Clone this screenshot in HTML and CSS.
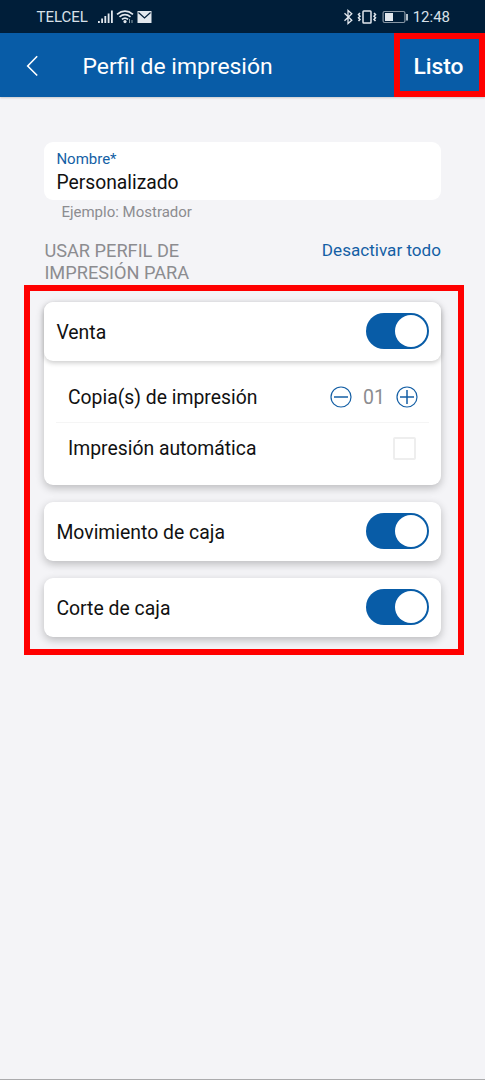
FILE: index.html
```html
<!DOCTYPE html>
<html lang="es">
<head>
<meta charset="utf-8">
<title>Perfil de impresión</title>
<link rel="stylesheet" href="styles.css">
</head>
<body>
<div class="screen">
  <div class="status">
    <span class="carrier">TELCEL</span>
    <svg class="signal" width="56" height="16" viewBox="0 0 56 16">
      <g fill="#e2e8ee">
        <rect x="0" y="12" width="1.8" height="2"/><rect x="3.2" y="9.500" width="1.8" height="4.500"/><rect x="6.400" y="7" width="1.8" height="7"/><rect x="9.700" y="4.500" width="1.8" height="9.500"/><rect x="13" y="1.500" width="1.8" height="12.500"/>
        <circle cx="27" cy="12.6" r="1.6"/>
        <path d="M39.500 2h14v12h-14z"/>
      </g>
      <g fill="none" stroke="#e2e8ee" stroke-width="1.7">
        <path d="M19 5.300Q27-1.200 35 5.300M21.500 7.900Q27 3.400 32.500 7.900M23.900 10.400Q27 7.800 30.100 10.400"/>
        <path d="M31.500 10v4M34 11v3" stroke-width="1" stroke="#8fa4ae"/>
      </g>
      <path d="M40.500 3.500l6 5.500 6-5.500" fill="none" stroke="#001e39" stroke-width="1.2"/>
    </svg>
    <svg class="indicators" width="66" height="16" viewBox="0 0 66 16" fill="none" stroke="#e2e8ee" stroke-width="1.3">
      <path d="M1.500 4.200l7.300 7L5 14.500v-13l3.800 3.300-7.300 7"/>
      <rect x="20" y="2" width="8" height="12" rx=".8" stroke-width="1.5"/>
      <path d="M17 4l-1.500 1.600 1.500 1.600-1.500 1.600 1.500 1.600-1.500 1.600M31 4l1.500 1.600L31 7.200l1.500 1.600-1.500 1.600 1.500 1.600" stroke-width="1.5"/>
      <rect x="40.100" y="2.500" width="21.800" height="11" rx="1.5" stroke="#8796a4" stroke-width="1.2"/>
      <path d="M42 4h8v8h-8z" fill="#e2e8ee" stroke="none"/>
      <path d="M64 5v6.500" stroke-width="1.6"/>
    </svg>
    <span class="clock">12:48</span>
  </div>
  <header class="appbar">
    <svg class="back" width="14" height="22" viewBox="0 0 14 22"><path d="M12.200 1.200L2.700 11l9.500 9.500" fill="none" stroke="#fff" stroke-width="1.6"/></svg>
    <h1 class="title">Perfil de impresión</h1>
    <button class="done">Listo</button>
  </header>
  <main class="content">
    <div class="field">
      <label class="field-label">Nombre*</label>
      <div class="field-value">Personalizado</div>
    </div>
    <div class="hint">Ejemplo: Mostrador</div>
    <div class="section">
      <h2 class="section-title">USAR PERFIL DE<br>IMPRESIÓN PARA</h2>
      <a class="disable">Desactivar todo</a>
    </div>
    <div class="group">
      <div class="card"><span class="name">Venta</span><span class="switch"></span></div>
      <div class="details">
        <div class="row copies">
          <span class="name">Copia(s) de impresión</span>
          <div class="stepper">
            <svg width="22" height="22" viewBox="0 0 22 22" fill="none" stroke="#145fa5" stroke-width="1.2"><circle cx="11" cy="11" r="10"/><path d="M4 11h14" stroke-width="1.5"/></svg>
            <span class="count">01</span>
            <svg width="22" height="22" viewBox="0 0 22 22" fill="none" stroke="#145fa5" stroke-width="1.2"><circle cx="11" cy="11" r="10"/><path d="M4 11h14M11 4v14" stroke-width="1.5"/></svg>
          </div>
        </div>
        <div class="row auto"><span class="name">Impresión automática</span><span class="checkbox"></span></div>
      </div>
    </div>
    <div class="card"><span class="name">Movimiento de caja</span><span class="switch"></span></div>
    <div class="card"><span class="name">Corte de caja</span><span class="switch"></span></div>
    <div class="highlight"></div>
  </main>
</div>
</body>
</html>
```
FILE: styles.css
```css
* { box-sizing: border-box; }
body { margin: 0; background: #f4f4f7; font-family: Roboto, sans-serif; color: #111; }
.screen { height: 1080px; overflow: hidden; border-bottom: 1px solid #ababad; }
.status { height: 33px; background: #001e39; color: #d8e0e8; display: flex; align-items: center; padding: 0 35px 0 36.5px; font-size: 15px; }
.signal { margin-left: 10px; }
.indicators { margin-left: auto; margin-right: 4px; }
.appbar { height: 64px; background: #085ca7; color: #fff; display: flex; align-items: center; padding-left: 25px; box-shadow: 0 1px 2px rgba(0,0,0,.18); }
.back { margin-top: 1px; }
.title { margin: 4px 0 0 43.5px; font-weight: 400; font-size: 22.9px; line-height: 28px; white-space: nowrap; }
.done { margin-left: auto; width: 91px; height: 64px; padding: 3px 2px 0 0; background: none; border: 6px solid #f00; color: #fff; font: 500 22.8px Roboto, sans-serif; }
.content { position: relative; padding: 45px 44px 0 44.4px; }
.field { height: 58px; background: #fff; border-radius: 9px; padding: 8px 12px 0; }
.field-label { display: block; font-size: 15px; line-height: 18px; color: #145fa5; }
.field-value { font-size: 19.3px; line-height: 30px; }
.hint { padding-left: 17px; font-size: 15px; line-height: 24px; color: #8c8c90; }
.section { display: flex; justify-content: space-between; height: 77.500px; padding-top: 16px; }
.section-title { margin: 0; font-weight: 400; font-size: 18.2px; line-height: 21.500px; color: #8c8c90; }
.disable { font-size: 17.1px; line-height: 20px; color: #145fa5; }
.group { margin-bottom: 17px; border-radius: 9px; background: #fff; box-shadow: 0 3px 8px rgba(0,0,0,.24); }
.card { display: flex; align-items: center; justify-content: space-between; height: 59px; padding: 0 12px; margin-bottom: 17px; background: #fff; border-radius: 9px; box-shadow: 0 3px 8px rgba(0,0,0,.24); font-size: 19.4px; }
.group .card { margin: 0; box-shadow: 0 2px 5px rgba(0,0,0,.2); }
.card .name { padding-top: 2px; }
.switch { width: 63px; height: 36px; border-radius: 18px; background: #085ca7; padding: 2px; display: flex; justify-content: flex-end; }
.switch::before { content: ""; width: 32px; height: 32px; border-radius: 50%; background: #fff; }
.details { padding: 11.500px 12px 13px; }
.row { display: flex; align-items: center; justify-content: space-between; padding: 0 13px 0 11.6px; height: 49px; font-size: 19.35px; }
.copies { height: 50.500px; border-bottom: 1px solid #f5f5f5; padding-top: 1px; padding-right: 11px; }
.auto { padding-top: 2px; }
.row .name { padding-top: 1px; }
.stepper { display: flex; align-items: center; gap: 11px; }
.count { color: #8c8c90; font-size: 19.5px; width: 22px; padding-top: 1px; }
.checkbox { width: 23px; height: 23px; border: 2px solid #eee; border-radius: 2px; }
.highlight { position: absolute; left: 24px; top: 188px; width: 440px; height: 370px; border: 6px solid #f00; }
```
